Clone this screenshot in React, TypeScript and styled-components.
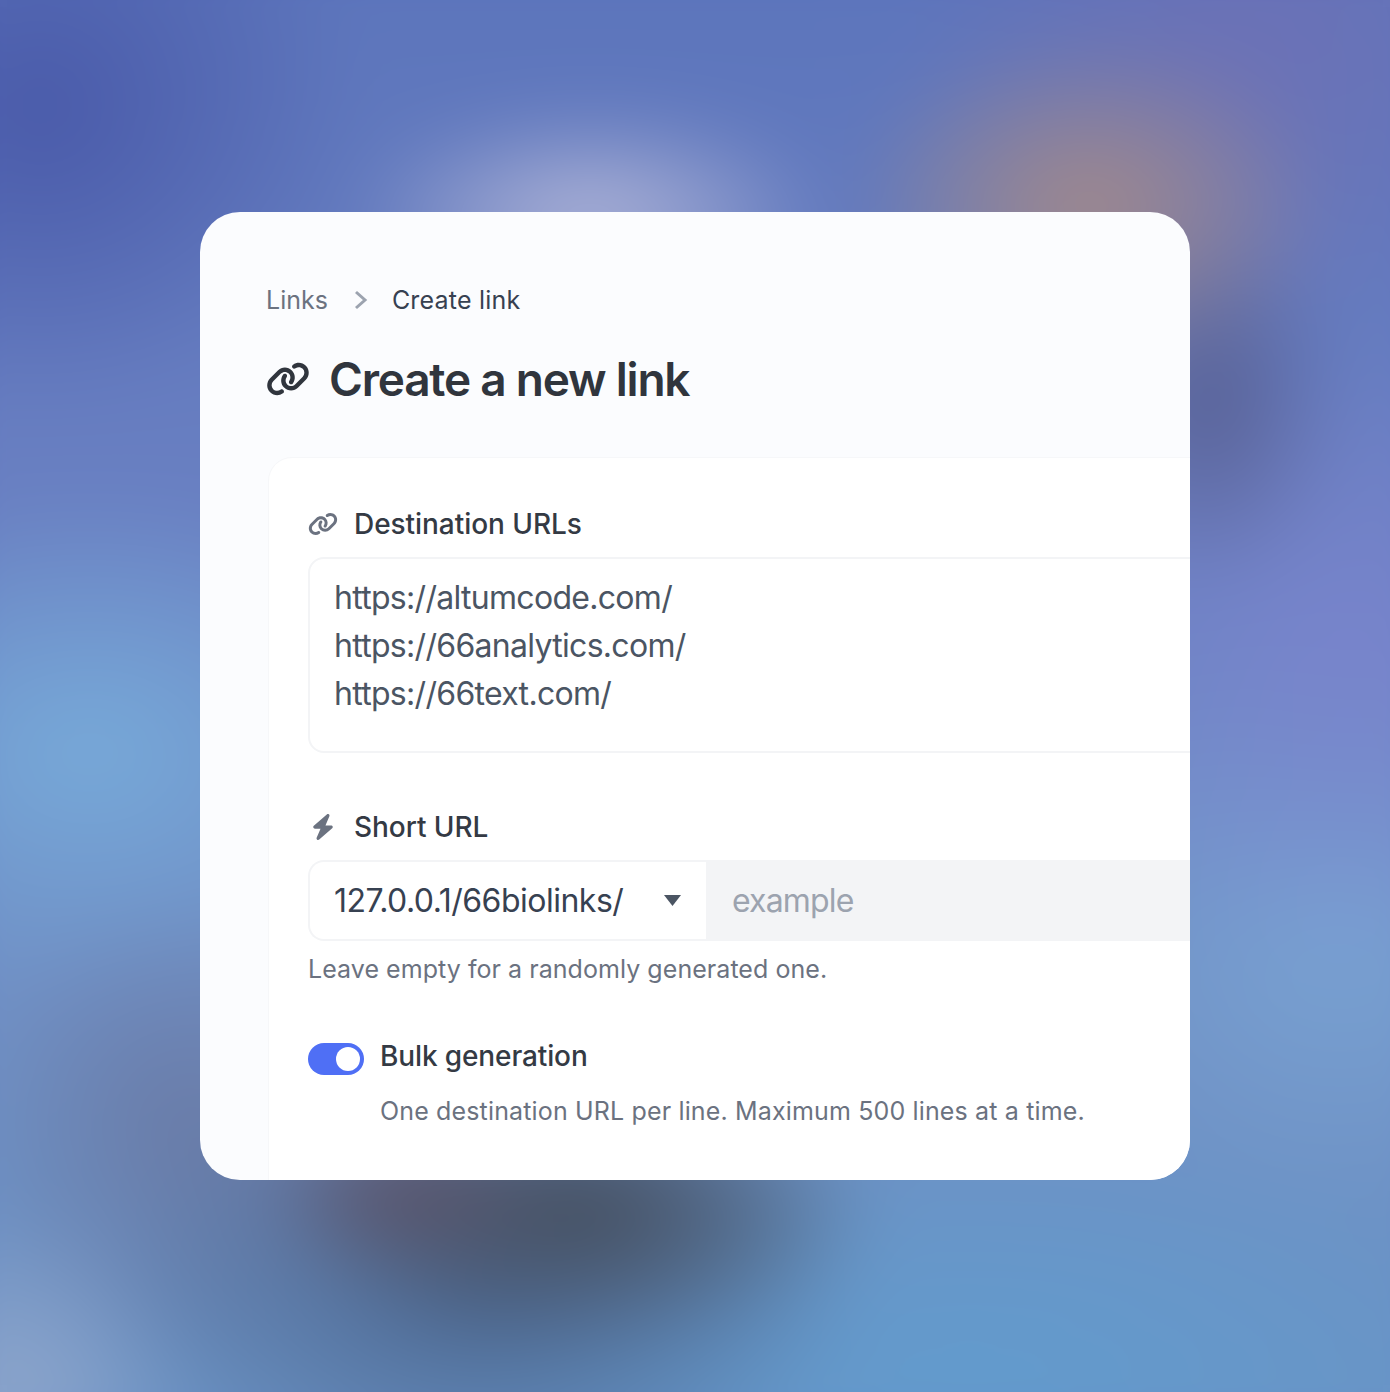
import React from "react";
import styled, { createGlobalStyle } from "styled-components";
import { FaLink, FaBolt } from "react-icons/fa6";

const Global = createGlobalStyle`
  html, body { margin: 0; padding: 0; }
  body { font-family: Inter, "Liberation Sans", sans-serif; -webkit-font-smoothing: antialiased; }
`;

const Page = styled.div`
  position: relative;
  width: 1390px;
  height: 1392px;
  overflow: hidden;
  display: flex;
  align-items: center;
  justify-content: center;
  background: #6079bd;
`;

const Backdrop = styled.div`
  position: absolute;
  inset: -80px;
  filter: blur(36px);
  background:
    radial-gradient(ellipse 240px 105px at 670px 295px, rgba(196, 196, 222, 0.85), rgba(196, 196, 222, 0) 100%),
    radial-gradient(ellipse 240px 170px at 1170px 285px, rgba(172, 140, 130, 0.9), rgba(172, 140, 130, 0) 100%),
    radial-gradient(ellipse 130px 190px at 1290px 480px, rgba(84, 88, 135, 0.8), rgba(84, 88, 135, 0) 100%),
    radial-gradient(ellipse 150px 90px at 480px 1270px, rgba(95, 72, 88, 0.7), rgba(95, 72, 88, 0) 100%),
    radial-gradient(ellipse 300px 140px at 660px 1290px, rgba(68, 76, 90, 1), rgba(68, 76, 90, 0) 100%),
    radial-gradient(ellipse 380px 220px at 560px 1370px, rgba(70, 95, 135, 0.85), rgba(70, 95, 135, 0) 100%),
    radial-gradient(ellipse 230px 240px at 270px 1210px, rgba(100, 100, 135, 0.5), rgba(100, 100, 135, 0) 100%),
    radial-gradient(ellipse 180px 180px at 90px 1470px, rgba(150, 170, 205, 0.85), rgba(150, 170, 205, 0) 100%),
    radial-gradient(ellipse 360px 260px at 170px 830px, rgba(120, 172, 218, 0.95), rgba(120, 172, 218, 0) 100%),
    radial-gradient(ellipse 320px 300px at 120px 190px, rgba(72, 88, 168, 0.95), rgba(72, 88, 168, 0) 100%),
    radial-gradient(ellipse 360px 300px at 1330px 130px, rgba(112, 112, 180, 0.8), rgba(112, 112, 180, 0) 100%),
    radial-gradient(ellipse 300px 320px at 1430px 740px, rgba(122, 132, 205, 0.9), rgba(122, 132, 205, 0) 100%),
    radial-gradient(ellipse 300px 300px at 1420px 1000px, rgba(122, 165, 212, 0.9), rgba(122, 165, 212, 0) 100%),
    radial-gradient(ellipse 600px 260px at 1050px 1450px, rgba(98, 155, 205, 1), rgba(98, 155, 205, 0) 100%),
    linear-gradient(180deg, #5b74bb 0%, #6a80c2 40%, #7090c5 70%, #6a93c4 100%);
`;

const Card = styled.main`
  position: relative;
  width: 990px;
  height: 968px;
  box-sizing: border-box;
  padding: 72px 0 0 66px;
  background: #fbfcfe;
  border-radius: 40px;
  overflow: hidden;
`;

const Breadcrumb = styled.nav`
  display: flex;
  align-items: center;
  height: 32px;
  font-size: 25px;
  line-height: 32px;
`;

const Crumb = styled.span<{ $current?: boolean }>`
  color: ${(p) => (p.$current ? "#374151" : "#6b7280")};
  letter-spacing: ${(p) => (p.$current ? "0.2px" : "0")};
`;

const CrumbSep = styled.svg`
  width: 14px;
  height: 20px;
  margin: 0 24px 0 26px;
  fill: none;
  stroke: #9ca3af;
  stroke-width: 3;
`;

const Title = styled.h1`
  display: flex;
  align-items: center;
  gap: 19px;
  margin: 34px 0 0;
  height: 58px;
  font-size: 46px;
  line-height: 58px;
  font-weight: 600;
  letter-spacing: -1.22px;
  color: #30353d;
`;

const Panel = styled.section`
  margin: 49px 0 0 2px;
  width: 1000px;
  height: 800px;
  box-sizing: border-box;
  padding: 48px 0 0 39px;
  background: #fff;
  border: 1px solid #f6f7f9;
  border-radius: 24px;
`;

const Label = styled.div`
  display: flex;
  align-items: center;
  height: 36px;
  font-size: 28px;
  line-height: 36px;
  font-weight: 500;
  letter-spacing: -0.05px;
  color: #343a44;
`;

const LabelIcon = styled.span`
  display: flex;
  justify-content: center;
  width: 30px;
  margin-right: 16px;
  color: #6b7280;
`;

const TextArea = styled.div`
  margin-top: 15px;
  height: 196px;
  width: 1000px;
  box-sizing: border-box;
  padding: 15px 24px;
  border: 2px solid #f3f4f6;
  border-radius: 16px;
  font-size: 32px;
  line-height: 48px;
  letter-spacing: -0.7px;
  color: #4b5563;
`;

const ShortLabel = styled(Label)`
  margin-top: 56px;
`;

const InputGroup = styled.div`
  display: flex;
  margin-top: 15px;
  height: 81px;
  width: 1000px;
`;

const SelectBox = styled.div`
  flex: none;
  width: 398px;
  box-sizing: border-box;
  display: flex;
  align-items: center;
  justify-content: space-between;
  padding: 0 25px 0 24px;
  border: 2px solid #f3f4f6;
  border-right: 0;
  border-radius: 16px 0 0 16px;
  font-size: 32px;
  letter-spacing: -0.5px;
  color: #374151;
`;

const Caret = styled.svg`
  width: 17px;
  height: 11px;
  fill: #4b5563;
`;

const Input = styled.div`
  flex: 1;
  box-sizing: border-box;
  display: flex;
  align-items: center;
  padding-left: 26px;
  background: #f3f4f6;
  font-size: 32px;
  letter-spacing: -0.85px;
  color: #9ca3af;
`;

const Help = styled.p`
  margin: 12px 0 0;
  font-size: 25px;
  line-height: 32px;
  letter-spacing: 0.05px;
  color: #6b7280;
`;

const ToggleRow = styled.div`
  display: flex;
  align-items: center;
  gap: 16px;
  margin-top: 54px;
  height: 36px;
`;

const Toggle = styled.span`
  position: relative;
  flex: none;
  width: 56px;
  height: 32px;
  margin-top: 3px;
  border-radius: 16px;
  background: #4f6ff5;
  &::after {
    content: "";
    position: absolute;
    top: 4px;
    right: 4px;
    width: 24px;
    height: 24px;
    border-radius: 50%;
    background: #fff;
  }
`;

const ToggleLabel = styled.span`
  padding-bottom: 2px;
  font-size: 28px;
  line-height: 36px;
  font-weight: 500;
  letter-spacing: -0.12px;
  color: #343a44;
`;

const ToggleHelp = styled(Help)`
  margin: 20px 0 0 72px;
  letter-spacing: 0.15px;
`;

export default function App() {
  return (
    <Page>
      <Global />
      <Backdrop />
      <Card>
        <Breadcrumb>
          <Crumb>Links</Crumb>
          <CrumbSep viewBox="0 0 14 20"><path d="M2 2 L11 10 L2 18" /></CrumbSep>
          <Crumb $current>Create link</Crumb>
        </Breadcrumb>
        <Title>
          <FaLink size={44} />
          Create a new link
        </Title>
        <Panel>
          <Label>
            <LabelIcon><FaLink size={30} /></LabelIcon>
            Destination URLs
          </Label>
          <TextArea>
            https://altumcode.com/<br />
            https://66analytics.com/<br />
            https://66text.com/
          </TextArea>
          <ShortLabel>
            <LabelIcon><FaBolt size={26} /></LabelIcon>
            Short URL
          </ShortLabel>
          <InputGroup>
            <SelectBox>
              127.0.0.1/66biolinks/
              <Caret viewBox="0 0 17 11"><path d="M0 0 H17 L8.5 11 Z" /></Caret>
            </SelectBox>
            <Input>example</Input>
          </InputGroup>
          <Help>Leave empty for a randomly generated one.</Help>
          <ToggleRow>
            <Toggle />
            <ToggleLabel>Bulk generation</ToggleLabel>
          </ToggleRow>
          <ToggleHelp>One destination URL per line. Maximum 500 lines at a time.</ToggleHelp>
        </Panel>
      </Card>
    </Page>
  );
}
